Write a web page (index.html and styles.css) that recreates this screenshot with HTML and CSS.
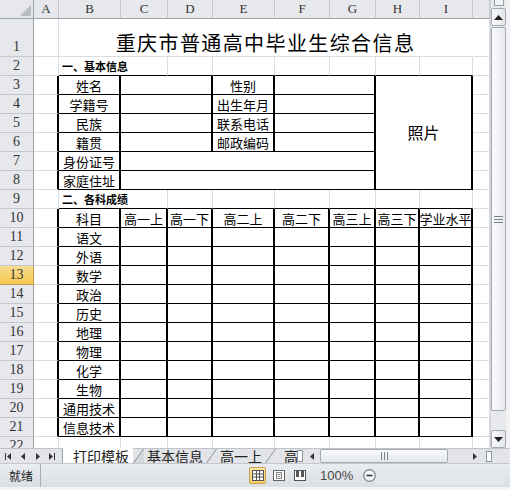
FILE: index.html
```html
<!DOCTYPE html>
<html>
<head>
<meta charset="utf-8">
<link rel="stylesheet" href="styles.css">
</head>
<body>
<div class="app">
  <div class="main">
    <div class="sheet">
      <div class="corner"><svg width="12" height="12" viewBox="0 0 12 12"><path d="M12 1 L12 12 L1 12 Z" fill="#b9bdc3"/></svg></div>
      <div class="ch">A</div><div class="ch">B</div><div class="ch">C</div><div class="ch">D</div><div class="ch">E</div><div class="ch">F</div><div class="ch">G</div><div class="ch">H</div><div class="ch">I</div><div class="ch"></div>

      <div class="rh">1</div><div class="c"></div><div class="c title s8">重庆市普通高中毕业生综合信息</div><div class="c"></div>

      <div class="rh">2</div><div class="c"></div><div class="c sec s2 bt">一、基本信息</div><div class="c bt"></div><div class="c bt"></div><div class="c bt"></div><div class="c bt"></div><div class="c bt"></div><div class="c bt"></div><div class="c"></div>

      <div class="rh">3</div><div class="c bl"></div><div class="c b">姓名</div><div class="c b s2"></div><div class="c b">性别</div><div class="c b s2"></div><div class="c b photo">照片</div><div class="c"></div>
      <div class="rh">4</div><div class="c bl"></div><div class="c b">学籍号</div><div class="c b s2"></div><div class="c b">出生年月</div><div class="c b s2"></div><div class="c"></div>
      <div class="rh">5</div><div class="c bl"></div><div class="c b">民族</div><div class="c b s2"></div><div class="c b">联系电话</div><div class="c b s2"></div><div class="c"></div>
      <div class="rh">6</div><div class="c bl"></div><div class="c b">籍贯</div><div class="c b s2"></div><div class="c b">邮政编码</div><div class="c b s2"></div><div class="c"></div>
      <div class="rh">7</div><div class="c bl"></div><div class="c b">身份证号</div><div class="c b s5"></div><div class="c"></div>
      <div class="rh">8</div><div class="c bl"></div><div class="c b">家庭住址</div><div class="c b s5"></div><div class="c"></div>

      <div class="rh">9</div><div class="c"></div><div class="c sec s2 bt">二、各科成绩</div><div class="c bt"></div><div class="c bt"></div><div class="c bt"></div><div class="c bt"></div><div class="c bt"></div><div class="c bt"></div><div class="c"></div>

      <div class="rh">10</div><div class="c bl"></div><div class="c b">科目</div><div class="c b">高一上</div><div class="c b">高一下</div><div class="c b">高二上</div><div class="c b">高二下</div><div class="c b">高三上</div><div class="c b">高三下</div><div class="c b">学业水平</div><div class="c"></div>
      <div class="rh">11</div><div class="c bl"></div><div class="c b">语文</div><div class="c b"></div><div class="c b"></div><div class="c b"></div><div class="c b"></div><div class="c b"></div><div class="c b"></div><div class="c b"></div><div class="c"></div>
      <div class="rh">12</div><div class="c bl"></div><div class="c b">外语</div><div class="c b"></div><div class="c b"></div><div class="c b"></div><div class="c b"></div><div class="c b"></div><div class="c b"></div><div class="c b"></div><div class="c"></div>
      <div class="rh sel">13</div><div class="c bl"></div><div class="c b">数学</div><div class="c b"></div><div class="c b"></div><div class="c b"></div><div class="c b"></div><div class="c b"></div><div class="c b"></div><div class="c b"></div><div class="c"></div>
      <div class="rh">14</div><div class="c bl"></div><div class="c b">政治</div><div class="c b"></div><div class="c b"></div><div class="c b"></div><div class="c b"></div><div class="c b"></div><div class="c b"></div><div class="c b"></div><div class="c"></div>
      <div class="rh">15</div><div class="c bl"></div><div class="c b">历史</div><div class="c b"></div><div class="c b"></div><div class="c b"></div><div class="c b"></div><div class="c b"></div><div class="c b"></div><div class="c b"></div><div class="c"></div>
      <div class="rh">16</div><div class="c bl"></div><div class="c b">地理</div><div class="c b"></div><div class="c b"></div><div class="c b"></div><div class="c b"></div><div class="c b"></div><div class="c b"></div><div class="c b"></div><div class="c"></div>
      <div class="rh">17</div><div class="c bl"></div><div class="c b">物理</div><div class="c b"></div><div class="c b"></div><div class="c b"></div><div class="c b"></div><div class="c b"></div><div class="c b"></div><div class="c b"></div><div class="c"></div>
      <div class="rh">18</div><div class="c bl"></div><div class="c b">化学</div><div class="c b"></div><div class="c b"></div><div class="c b"></div><div class="c b"></div><div class="c b"></div><div class="c b"></div><div class="c b"></div><div class="c"></div>
      <div class="rh">19</div><div class="c bl"></div><div class="c b">生物</div><div class="c b"></div><div class="c b"></div><div class="c b"></div><div class="c b"></div><div class="c b"></div><div class="c b"></div><div class="c b"></div><div class="c"></div>
      <div class="rh">20</div><div class="c bl"></div><div class="c b">通用技术</div><div class="c b"></div><div class="c b"></div><div class="c b"></div><div class="c b"></div><div class="c b"></div><div class="c b"></div><div class="c b"></div><div class="c"></div>
      <div class="rh">21</div><div class="c bl"></div><div class="c b">信息技术</div><div class="c b"></div><div class="c b"></div><div class="c b"></div><div class="c b"></div><div class="c b"></div><div class="c b"></div><div class="c b"></div><div class="c"></div>
      <div class="rh">22</div><div class="c"></div><div class="c"></div><div class="c"></div><div class="c"></div><div class="c"></div><div class="c"></div><div class="c"></div><div class="c"></div><div class="c"></div><div class="c"></div>
    </div>
    <div class="vs">
      <div class="vsplit"></div>
      <div class="vbtn"><svg width="9" height="5" viewBox="0 0 9 5"><path d="M0 5 L4.5 0 L9 5 Z" fill="#222"/></svg></div>
      <div class="vtrack"><div class="vthumb"><svg width="9" height="7" viewBox="0 0 9 7"><path d="M0 0.5H9M0 3.5H9M0 6.5H9" stroke="#7d838b" stroke-width="1"/></svg></div></div>
      <div class="vbtn"><svg width="9" height="5" viewBox="0 0 9 5"><path d="M0 0 L4.5 5 L9 0 Z" fill="#222"/></svg></div>
    </div>
    <div class="frame-r"></div>
  </div>
  <div class="tabbar">
    <div class="nav">
      <svg width="6" height="7" viewBox="0 0 6 7"><rect x="0" y="0" width="1" height="7" fill="#333"/><path d="M6 0 L2 3.5 L6 7Z" fill="#333"/></svg>
      <svg width="4" height="7" viewBox="0 0 4 7"><path d="M4 0 L0 3.5 L4 7Z" fill="#333"/></svg>
      <svg width="4" height="7" viewBox="0 0 4 7"><path d="M0 0 L4 3.5 L0 7Z" fill="#333"/></svg>
      <svg width="6" height="7" viewBox="0 0 6 7"><path d="M0 0 L4 3.5 L0 7Z" fill="#333"/><rect x="5" y="0" width="1" height="7" fill="#333"/></svg>
    </div>
    <div class="tab active">打印模板</div>
    <svg class="slant" width="11" height="14" viewBox="0 0 11 14"><path d="M0 14 L10 0 L11 0 L11 14Z" fill="#d4d7db"/><path d="M0.5 14 L10.5 0" stroke="#8d939b" stroke-width="1"/></svg>
    <div class="tab">基本信息</div>
    <svg class="slant" width="11" height="14" viewBox="0 0 11 14"><path d="M0.5 14 L10.5 0" stroke="#8d939b" stroke-width="1"/></svg>
    <div class="tab">高一上</div>
    <svg class="slant" width="11" height="14" viewBox="0 0 11 14"><path d="M0.5 14 L10.5 0" stroke="#8d939b" stroke-width="1"/></svg>
    <div class="tab clip">高一下</div>
    <div class="hsplit"></div>
    <div class="hs">
      <svg class="harr" width="4" height="7" viewBox="0 0 4 7"><path d="M4 0 L0 3.5 L4 7Z" fill="#333"/></svg>
      <div class="hthumb"><svg width="7" height="8" viewBox="0 0 7 8"><path d="M0.5 0V8M3.5 0V8M6.5 0V8" stroke="#7d838b" stroke-width="1"/></svg></div>
      <div class="hgap"></div>
      <svg class="harr" width="4" height="7" viewBox="0 0 4 7"><path d="M0 0 L4 3.5 L0 7Z" fill="#333"/></svg>
      <div class="hbox"></div>
    </div>
  </div>
  <div class="status">
    <div class="ready">就绪</div>
    <div class="spacer"></div>
    <div class="views">
      <div class="vbtn2 on"><svg width="12" height="11" viewBox="0 0 12 11"><rect x="0.5" y="0.5" width="11" height="10" fill="#fff" stroke="#555"/><path d="M0.5 4H11.5M0.5 7H11.5M4.5 0.5V10.5M7.5 0.5V10.5" stroke="#555"/></svg></div>
      <div class="vbtn2"><svg width="12" height="11" viewBox="0 0 12 11"><rect x="0.5" y="0.5" width="11" height="10" fill="#fff" stroke="#666"/><rect x="3.5" y="2.5" width="5" height="6" fill="none" stroke="#888"/><path d="M4.5 4.5H7.5M4.5 6.5H7.5" stroke="#888"/></svg></div>
      <div class="vbtn2"><svg width="12" height="11" viewBox="0 0 12 11"><rect x="0.5" y="0.5" width="11" height="10" fill="#fff" stroke="#555"/><rect x="2" y="1" width="3" height="6" fill="#555"/><rect x="7" y="1" width="3" height="6" fill="#555"/></svg></div>
    </div>
    <div class="zoom">100%</div>
    <svg class="zminus" width="13" height="13" viewBox="0 0 13 13"><circle cx="6.5" cy="6.5" r="5.8" fill="#f4f5f7" stroke="#7c828a" stroke-width="1.2"/><path d="M3.5 6.5H9.5" stroke="#333" stroke-width="1.6"/></svg>
    <div class="slider"></div>
  </div>
  <div class="frame-b"></div>
</div>
</body>
</html>
```
FILE: styles.css
```css
* { box-sizing: border-box; margin: 0; padding: 0; }
html, body { width: 510px; height: 490px; overflow: hidden; }
body { background: #eef0f3; font-family: "Noto Sans CJK SC", "Noto Sans", sans-serif; color: #000; }

.app { display: flex; flex-direction: column; width: 510px; height: 490px; }
.main { display: flex; height: 448px; }

.sheet {
  display: grid;
  width: 490px;
  height: 448px;
  overflow: hidden;
  background: #fff;
  grid-template-columns: 34px 25px 62px 47px 45px 62px 55px 46px 44px 53px 17px;
  grid-template-rows: 19px 38px repeat(20, 19px) 19px;
}

.corner {
  background: #e6e8ec;
  border-right: 1px solid #9ba3ad;
  border-bottom: 1px solid #9ba3ad;
  display: flex; align-items: flex-end; justify-content: flex-end;
  padding: 0 2px 2px 0;
}
.ch {
  background: #e6e8ec;
  border-right: 1px solid #c3c8ce;
  border-bottom: 1px solid #9ba3ad;
  font-family: "Liberation Serif", serif;
  font-size: 13px;
  color: #333;
  display: flex; align-items: center; justify-content: center;
}
.rh {
  background: #e6e8ec;
  border-right: 1px solid #9ba3ad;
  border-bottom: 1px solid #c3c8ce;
  font-family: "Liberation Serif", serif;
  font-size: 14px;
  color: #333;
  display: flex; align-items: flex-end; justify-content: center;
  line-height: 16px;
  padding-bottom: 1px;
}
.rh.sel {
  background: linear-gradient(#f9dc8e, #f6c851);
  border-right-color: #c29b4b;
  border-bottom-color: #c29b4b;
}

.c {
  border-right: 1px solid #dadcdd;
  border-bottom: 1px solid #dadcdd;
  display: flex; align-items: center; justify-content: center;
  font-size: 13px;
  line-height: 1;
  white-space: nowrap;
  overflow: hidden;
}
.b { border-right: 2px solid #000; border-bottom: 1px solid #000; }
.bl { border-right: 2px solid #000; }
.bt { border-bottom: 1px solid #000; }
.s2 { grid-column: span 2; }
.s5 { grid-column: span 5; }
.s8 { grid-column: span 8; }

.title {
  font-size: 20px;
  letter-spacing: 1.4px;
  align-items: flex-end;
  padding-bottom: 3px;
  border-right-color: #fff;
  border-bottom-color: #dadcdd;
}
.sec {
  justify-content: flex-start;
  align-items: flex-end;
  font-size: 11px;
  font-weight: bold;
  padding: 0 0 3px 3px;
}
.photo {
  grid-column: span 2;
  grid-row: span 6;
  font-size: 16px;
  padding-bottom: 2px;
}

.vs {
  width: 16px;
  background: #e7e9ec;
  border-left: 1px solid #d0d3d8;
  display: flex; flex-direction: column; align-items: center;
}
.vsplit {
  width: 10px; height: 6px;
  margin: 0 0 2px;
  border: 1px solid #9aa0a8;
  border-top: none;
  background: #f3f4f6;
}
.vbtn {
  width: 15px; height: 18px;
  border: 1px solid #a3a9b1;
  border-radius: 2px;
  background: linear-gradient(to right, #fbfbfc, #e3e6ea);
  display: flex; align-items: center; justify-content: center;
}
.vtrack {
  height: 404px;
  width: 15px;
  padding: 1px 0 19px;
}
.vthumb {
  height: 384px;
  border: 1px solid #a3a9b1;
  border-radius: 2px;
  background: linear-gradient(to right, #fbfbfc, #e6e9ed);
  display: flex; align-items: center; justify-content: center;
}
.frame-r { width: 4px; background: #f1f2f4; }

.tabbar {
  height: 15px;
  display: flex;
  align-items: stretch;
  background: #e2e4e8;
  border-top: 1px solid #c0c4ca;
  font-size: 14px;
  line-height: 14px;
}
.nav {
  width: 63px;
  display: flex; align-items: center;
  padding-left: 5px; gap: 0;
  border-right: 1px solid #9aa0a8;
}
.nav svg:nth-child(1) { margin-right: 10px; }
.nav svg:nth-child(2) { margin-right: 11px; }
.nav svg:nth-child(3) { margin-right: 9px; }
.tab {
  color: #222;
  padding: 0 3px;
  display: flex; align-items: flex-end;
  white-space: nowrap;
}
.tab.active {
  background: #fff;
  margin-top: -1px;
  padding: 0 5px 0 10px;
  width: 70px;
}
.tab.clip { width: 21px; overflow: hidden; padding: 0 0 0 8px; }
.slant { display: block; align-self: flex-end; }
.hsplit {
  width: 6px; height: 12px;
  margin: 1px 2px 0 0;
  border: 1px solid #8d939b;
  background: #fff;
}
.hs {
  width: 187px;
  display: flex; align-items: center;
}
.harr { margin: 0 6px 0 5px; }
.hthumb {
  width: 128px; height: 14px;
  border: 1px solid #a3a9b1;
  border-radius: 2px;
  background: linear-gradient(#fbfbfc, #e3e6ea);
  display: flex; align-items: center; justify-content: center;
}
.hgap { width: 20px; }
.hbox { width: 6px; height: 11px; border: 1px solid #8d939b; background: #fff; margin-left: 3px; }

.status {
  height: 24px;
  display: flex; align-items: center;
  background: linear-gradient(#e9ecf0, #dbdfe5);
  border-top: 1px solid #c5c9cf;
  font-size: 12px;
}
.ready {
  width: 41px;
  padding-left: 9px;
  color: #222;
  border-right: 1px solid #a9aeb5;
  height: 100%;
  display: flex; align-items: center;
}
.spacer { width: 208px; }
.views { display: flex; gap: 4px; align-items: center; }
.vbtn2 {
  width: 17px; height: 17px;
  display: flex; align-items: center; justify-content: center;
  border: 1px solid transparent;
  border-radius: 2px;
}
.vbtn2.on { background: linear-gradient(#fde8a8, #f8cf65); border-color: #c9a04e; }
.zoom { margin-left: 12px; color: #4a4a4a; font-family: "Liberation Sans", sans-serif; font-size: 13px; }
.zminus { margin-left: 10px; }
.slider { flex: 1; height: 18px; margin: 0 6px 0 1px; background: #e4e7eb; }
.frame-b { height: 3px; background: #f4f5f7; }
```
